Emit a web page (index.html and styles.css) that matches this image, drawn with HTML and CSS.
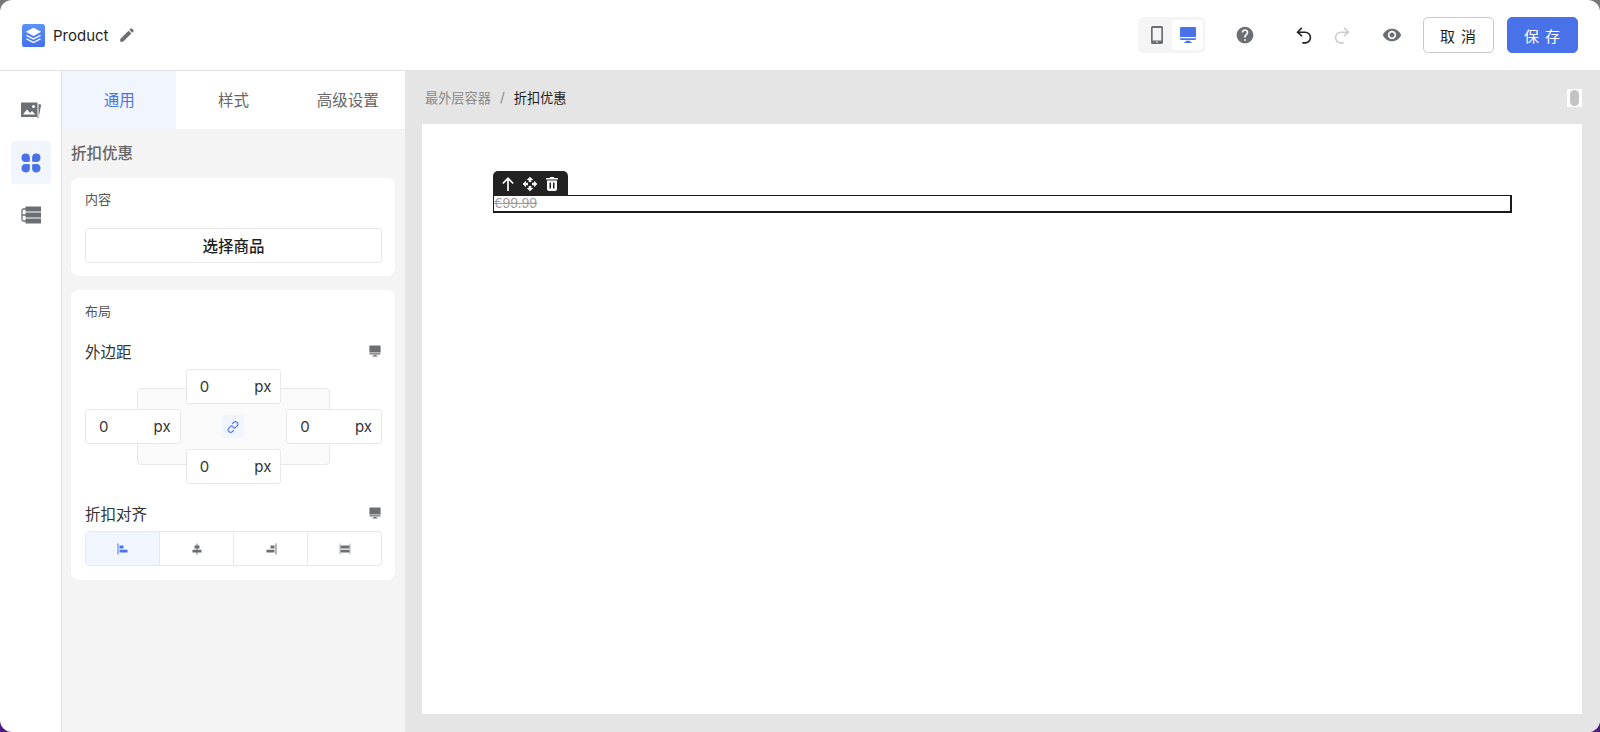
FILE: index.html
```html
<!DOCTYPE html>
<html lang="zh-CN">
<head>
  <meta charset="UTF-8" />
  <meta name="viewport" content="width=device-width, initial-scale=1.0" />
  <title>Product</title>
  <link rel="stylesheet" href="styles.css">
</head>
<body>
  <div class="app">
    <header class="topbar">
      <div class="brand">
        <svg class="logo" viewBox="0 0 24 24">
          <defs>
            <linearGradient id="logo-fill" x1="0" y1="0" x2="0" y2="1">
              <stop offset="0" stop-color="#5b93f5" />
              <stop offset="1" stop-color="#4470ec" />
            </linearGradient>
          </defs>
          <rect width="24" height="24" rx="3" fill="url(#logo-fill)" />
          <path d="M12 4l8 4.200-8 4.200-8-4.200z" fill="#fff" />
          <path d="M5.400 11.400L12 14.900l6.600-3.500 1.400.8-8 4.200-8-4.200zM5.400 15L12 18.500 18.600 15l1.400.8-8 4.200-8-4.200z" fill="#fff" />
        </svg>
        <span class="brand-name">Product</span>
        <svg class="icon-18 grey" viewBox="0 0 24 24"><path d="M3 17.250V21h3.750L17.810 9.940l-3.750-3.750L3 17.250zM20.710 7.040a1 1 0 0 0 0-1.410l-2.340-2.340a1 1 0 0 0-1.410 0l-1.830 1.830 3.750 3.750 1.830-1.830z" /></svg>
      </div>
      <div class="actions">
        <div class="device-switch">
          <span class="device">
            <svg class="icon-20 grey" viewBox="0 0 20 20"><path fill-rule="evenodd" d="M5.500 1h9A1.500 1.500 0 0 1 16 2.500v15a1.500 1.500 0 0 1-1.500 1.500h-9A1.500 1.500 0 0 1 4 17.500v-15A1.500 1.500 0 0 1 5.500 1zM5.700 3v12.600h8.600V3zM9 16.500v1h2v-1z" /></svg>
          </span>
          <span class="device active">
            <svg class="icon-20 blue" viewBox="0 0 20 20"><path d="M3 2h14a1 1 0 0 1 1 1v9H2V3a1 1 0 0 1 1-1zM2 13.200h16V14a1 1 0 0 1-1 1H3a1 1 0 0 1-1-1zM8 15.800h4l.6 1.400h1.400V18H6v-.8h1.400z" /></svg>
          </span>
        </div>
        <svg class="icon-20 grey help" viewBox="0 0 24 24"><path d="M12 2C6.480 2 2 6.480 2 12s4.480 10 10 10 10-4.480 10-10S17.520 2 12 2zm1 17h-2v-2h2v2zm2.070-7.750l-.9.920C13.450 12.900 13 13.500 13 15h-2v-.5c0-1.100.450-2.100 1.170-2.830l1.240-1.260c.370-.360.590-.860.590-1.410 0-1.100-.9-2-2-2s-2 .9-2 2H8c0-2.210 1.790-4 4-4s4 1.790 4 4c0 .880-.360 1.680-.930 2.250z" /></svg>
        <svg class="history" viewBox="0 0 18 18" fill="none" stroke="#1f1f1f" stroke-width="1.400"><path d="M3.500 6.500H10a4.800 4.800 0 0 1 0 9.600H7.500" /><path d="M7 2.600L3.200 6.500l4 3.500" /></svg>
        <svg class="history redo" viewBox="0 0 18 18" fill="none" stroke="#c9ccd1" stroke-width="1.400"><path d="M14.500 6.500H8a4.800 4.800 0 0 0 0 9.600h2.500" /><path d="M11 2.600l3.800 3.900-4 3.500" /></svg>
        <svg class="icon-20 grey eye" viewBox="0 0 24 24"><path d="M12 4.500C7 4.500 2.730 7.610 1 12c1.730 4.390 6 7.500 11 7.500s9.270-3.110 11-7.500c-1.730-4.390-6-7.500-11-7.500zM12 17c-2.760 0-5-2.240-5-5s2.240-5 5-5 5 2.240 5 5-2.240 5-5 5zm0-8c-1.660 0-3 1.340-3 3s1.340 3 3 3 3-1.340 3-3-1.340-3-3-3z" /></svg>
        <button class="btn">取 消</button>
        <button class="btn primary">保 存</button>
      </div>
    </header>

    <div class="workspace">
      <nav class="rail">
        <span class="rail-item">
          <svg class="icon-24" viewBox="0 0 24 24"><path fill="#6b6e73" d="M2 3.500h16.500v14.500H2z" /><path fill="#fff" d="M4 15.500l4-5 3 3.500 2-2 3.500 3.500z" /><circle cx="14.500" cy="7.500" r="1.500" fill="#fff" /><path fill="#6b6e73" d="M19.500 5l2.700.7-2.700 13.300-2-.3 2-1z" /></svg>
        </span>
        <span class="rail-item active">
          <svg class="icon-24" viewBox="0 0 24 24" fill="#4a72e8">
            <path d="M10.800 10.800L6.500 10.900a4.200 4.200 0 1 1 4.400-4.400z" />
            <path d="M13.200 10.800l4.300.1a4.200 4.200 0 1 0-4.400-4.400z" />
            <path d="M10.800 13.200l-4.300-.1a4.200 4.200 0 1 0 4.400 4.400z" />
            <path d="M13.200 13.200l4.300-.1a4.200 4.200 0 1 1-4.400 4.400z" />
          </svg>
        </span>
        <span class="rail-item">
          <svg class="icon-24" viewBox="0 0 24 24"><path fill="none" stroke="#6b6e73" stroke-width="1.300" d="M7 6H4.500A1.500 1.500 0 0 0 3 7.500v9A1.500 1.500 0 0 0 4.500 18H7M3 12h4" /><path fill="#6b6e73" d="M6.500 3.500H22v5H6.500zM6.500 9.500H22v5H6.500zM6.500 15.500H22v5H6.500z" /></svg>
        </span>
      </nav>

      <aside class="panel">
        <div class="tabs">
          <div class="tab active">通用</div>
          <div class="tab">样式</div>
          <div class="tab">高级设置</div>
        </div>
        <div class="panel-body">
          <h2 class="panel-title">折扣优惠</h2>
          <section class="card">
            <h3 class="card-title">内容</h3>
            <button class="pick-btn">选择商品</button>
          </section>
          <section class="card">
            <h3 class="card-title">布局</h3>
            <div class="field-head margin-head">
              <span>外边距</span>
              <svg class="icon-14 grey" viewBox="0 0 20 20"><path d="M3 2h14a1 1 0 0 1 1 1v9H2V3a1 1 0 0 1 1-1zM2 13.200h16V14a1 1 0 0 1-1 1H3a1 1 0 0 1-1-1zM8 15.800h4l.6 1.400h1.400V18H6v-.8h1.400z" /></svg>
            </div>
            <div class="margin-box">
              <div class="margin-back"></div>
              <div class="num num-top"><span>0</span><span>px</span></div>
              <div class="num num-left"><span>0</span><span>px</span></div>
              <div class="link-cell">
                <span class="link-btn">
                  <svg viewBox="0 0 16 16" fill="none" stroke="#4a72e8" stroke-width="1.300"><path d="M7 4.500l2-2a2.300 2.300 0 0 1 3.300 0l1 1a2.300 2.300 0 0 1-.3 3l-2 2a2.300 2.300 0 0 1-3.200 0" /><path d="M9 11.500l-2 2a2.300 2.300 0 0 1-3.300 0l-1-1a2.300 2.300 0 0 1 .3-3l2-2a2.300 2.300 0 0 1 3.200 0" /></svg>
                </span>
              </div>
              <div class="num num-right"><span>0</span><span>px</span></div>
              <div class="num num-bottom"><span>0</span><span>px</span></div>
            </div>
            <div class="field-head align-head">
              <span>折扣对齐</span>
              <svg class="icon-14 grey" viewBox="0 0 20 20"><path d="M3 2h14a1 1 0 0 1 1 1v9H2V3a1 1 0 0 1 1-1zM2 13.200h16V14a1 1 0 0 1-1 1H3a1 1 0 0 1-1-1zM8 15.800h4l.6 1.400h1.400V18H6v-.8h1.400z" /></svg>
            </div>
            <div class="segments">
              <span class="segment active">
                <svg viewBox="0 0 14 14" fill="#4a72e8"><path d="M1.500 1.500h1v11h-1zM3.500 3.500h4v3h-4zM3.500 7.700h8v2.800h-8z" /></svg>
              </span>
              <span class="segment">
                <svg viewBox="0 0 14 14" fill="#6b6e73"><path d="M6.500 1.500h1v11h-1zM4.500 3.500h5v3h-5zM2.500 7.700h9v2.800h-9z" /></svg>
              </span>
              <span class="segment">
                <svg viewBox="0 0 14 14" fill="#6b6e73"><path d="M11.500 1.500h1v11h-1zM6.500 3.500h4v3h-4zM2.500 7.700h8v2.800h-8z" /></svg>
              </span>
              <span class="segment">
                <svg viewBox="0 0 14 14" fill="#6b6e73"><path opacity=".5" d="M1.500 1.500h1v11h-1zM11.500 1.500h1v11h-1z" /><path d="M2.500 3.500h9v3h-9zM2.500 7.700h9v2.800h-9z" /></svg>
              </span>
            </div>
          </section>
        </div>
      </aside>

      <main class="stage">
        <div class="crumbs">
          <span class="crumb-parent">最外层容器</span>
          <span class="crumb-sep">/</span>
          <span class="crumb-current">折扣优惠</span>
          <span class="scroll-hint"><i></i></span>
        </div>
        <div class="canvas">
          <div class="selected">
            <div class="tools">
              <svg viewBox="0 0 16 16" fill="none" stroke="#fff" stroke-width="1.700"><path d="M8 15V2.500M2.800 7.500L8 2.300l5.200 5.200" /></svg>
              <svg viewBox="0 0 24 24" fill="#fff"><path d="M10 9h4V6h3l-5-5-5 5h3v3zm-1 1H6V7l-5 5 5 5v-3h3v-4zm14 2l-5-5v3h-3v4h3v3l5-5zm-9 3h-4v3H7l5 5 5-5h-3v-3z" /></svg>
              <svg viewBox="0 0 16 16" fill="#fff"><path fill-rule="evenodd" d="M6 1h4v1h4v1.500H2V2h4zM3 4.500h10V13a2 2 0 0 1-2 2H5a2 2 0 0 1-2-2zM5.500 6.500v6H7v-6zm3.500 0v6h1.500v-6z" /></svg>
            </div>
            <span class="price">€99.99</span>
          </div>
        </div>
      </main>
    </div>
  </div>
</body>
</html>
```

FILE: styles.css
```css
* {
  box-sizing: border-box;
}
html {
  background: linear-gradient(to bottom, #77777a 50%, #4f1786 50%);
}
body {
  margin: 0;
  height: 732px;
  overflow: hidden;
  font-family: Inter, "Noto Sans CJK SC", sans-serif;
  color: #1f1f1f;
}
svg {
  display: block;
  flex: none;
}
.grey { fill: #6b6e73; }
.blue { fill: #4a72e8; }
.icon-14 { width: 14px; height: 14px; }
.icon-18 { width: 18px; height: 18px; }
.icon-20 { width: 20px; height: 20px; }
.icon-24 { width: 24px; height: 24px; }

.app {
  height: 732px;
  background: #fff;
  border-radius: 12px;
  overflow: hidden;
  display: flex;
  flex-direction: column;
}

/* top bar */
.topbar {
  height: 71px;
  flex: none;
  display: flex;
  align-items: center;
  justify-content: space-between;
  padding: 0 22px;
  border-bottom: 1px solid #e2e2e2;
}
.brand {
  display: flex;
  align-items: center;
}
.logo {
  width: 23px;
  height: 23px;
}
.brand-name {
  font-size: 15px;
  margin: 0 9px 0 8px;
}
.actions {
  display: flex;
  align-items: center;
}
.device-switch {
  display: flex;
  width: 67px;
  height: 36px;
  padding: 3px 2px 3px 3px;
  background: #f5f5f5;
  border-radius: 5px;
  margin-right: 30px;
}
.device {
  flex: 1;
  display: flex;
  align-items: center;
  justify-content: center;
  border-radius: 4px;
}
.device.active {
  background: #fff;
}
.help {
  margin-right: 39px;
}
.history {
  width: 20px;
  height: 20px;
  margin-right: 18px;
}
.redo {
  margin-right: 30px;
}
.eye {
  margin-right: 21px;
}
.btn {
  width: 71px;
  height: 36px;
  background: #fff;
  border: 1px solid #c6c9ce;
  border-radius: 5px;
  font: 15px Inter, "Noto Sans CJK SC", sans-serif;
  letter-spacing: 1px;
  color: #1f1f1f;
  padding: 0;
}
.btn.primary {
  background: #4a72e8;
  border-color: #4a72e8;
  color: #fff;
  margin-left: 13px;
}

.workspace {
  flex: 1;
  display: flex;
  min-height: 0;
}

/* left rail */
.rail {
  width: 62px;
  flex: none;
  border-right: 1px solid #e2e2e2;
  padding: 18px 0 0 11px;
  display: flex;
  flex-direction: column;
  gap: 9px;
}
.rail-item {
  width: 40px;
  height: 43px;
  display: flex;
  align-items: center;
  justify-content: center;
  border-radius: 4px;
}
.rail-item.active {
  background: #f1f5fe;
}

/* settings panel */
.panel {
  width: 343px;
  flex: none;
  background: #f4f4f4;
  display: flex;
  flex-direction: column;
}
.tabs {
  display: flex;
  height: 58px;
  flex: none;
  background: #fff;
}
.tab {
  flex: 1;
  display: flex;
  align-items: center;
  justify-content: center;
  padding-bottom: 2px;
  font-size: 15.500px;
  color: #666;
}
.tab.active {
  background: #f1f5fe;
  color: #4a72e8;
}
.panel-body {
  padding: 14px 10px 13px 9px;
}
.panel-title {
  margin: 0 0 13px;
  font-size: 15.500px;
  font-weight: 500;
  line-height: 22px;
  color: #666;
}
.card {
  background: #fff;
  border-radius: 8px;
  padding: 12px 13px 13px 14px;
  margin-bottom: 14px;
}
.card-title {
  margin: 0 0 20px;
  font-size: 13px;
  font-weight: 400;
  line-height: 18px;
  color: #555;
}
.pick-btn {
  display: block;
  width: 100%;
  height: 35px;
  padding: 0 0 2px;
  background: #fff;
  border: 1px solid #e8e8e8;
  border-radius: 3px;
  font: 500 15.500px Inter, "Noto Sans CJK SC", sans-serif;
  color: #1f1f1f;
}
.field-head {
  display: flex;
  align-items: center;
  justify-content: space-between;
  height: 22px;
  padding-top: 2px;
  font-size: 15.500px;
  line-height: 20px;
  margin-bottom: 6px;
  color: #333;
}
.field-head svg {
  margin-bottom: 4px;
}
.margin-head {
  margin-top: 21px;
}
.margin-box {
  display: grid;
  grid-template-columns: repeat(3, 1fr);
  grid-template-rows: 35px 35px 35px;
  gap: 5px;
}
.margin-back {
  grid-column: 1 / 4;
  grid-row: 1 / 4;
  margin: 19px 52px;
  background: #fafafa;
  border: 1px solid #e8e8e8;
  border-radius: 4px;
}
.num {
  display: flex;
  align-items: center;
  justify-content: space-between;
  background: #fff;
  border: 1px solid #e8e8e8;
  border-radius: 3px;
  padding: 0 9px 0 13px;
  font-size: 15px;
  color: #333;
}
.num-top { grid-column: 2; grid-row: 1; }
.num-left { grid-column: 1; grid-row: 2; }
.num-right { grid-column: 3; grid-row: 2; }
.num-bottom { grid-column: 2; grid-row: 3; }
.link-cell {
  grid-column: 2;
  grid-row: 2;
  display: flex;
  align-items: center;
  justify-content: center;
}
.link-btn {
  width: 22px;
  height: 23px;
  display: flex;
  align-items: center;
  justify-content: center;
  background: #f1f5fe;
  border-radius: 3px;
}
.link-btn svg {
  width: 14px;
  height: 14px;
}
.align-head {
  margin: 19px 0 6px;
}
.segments {
  display: flex;
  height: 35px;
  margin-bottom: 1px;
  border: 1px solid #e8e8e8;
  border-radius: 4px;
  overflow: hidden;
}
.segment {
  flex: 1;
  display: flex;
  align-items: center;
  justify-content: center;
  border-left: 1px solid #e8e8e8;
}
.segment:first-child {
  border-left: 0;
}
.segment.active {
  background: #f1f5fe;
}
.segment svg {
  width: 14px;
  height: 14px;
}

/* canvas side */
.stage {
  flex: 1;
  min-width: 0;
  background: #e5e5e5;
  padding: 0 18px 18px 17px;
  display: flex;
  flex-direction: column;
}
.crumbs {
  height: 53px;
  flex: none;
  display: flex;
  align-items: center;
  padding: 0 3px 1px;
  font-size: 13.200px;
}
.crumb-parent {
  color: #888;
}
.crumb-sep {
  color: #888;
  margin: 0 9px;
}
.scroll-hint {
  margin-left: auto;
  width: 15px;
  height: 18px;
  background: #fff;
  display: flex;
  justify-content: center;
  margin-right: -3px;
  margin-top: 2px;
}
.scroll-hint i {
  width: 9px;
  height: 16px;
  margin-top: 1px;
  background: #c4c4c4;
  border-radius: 5px;
}
.canvas {
  flex: 1;
  background: #fff;
  padding: 71px 70px 0 71px;
}
.selected {
  position: relative;
  height: 18px;
  border: 2px solid #1a1a1a;
  border-top-width: 1px;
  border-left-width: 1px;
  font-size: 12.700px;
  line-height: 16px;
}
.tools {
  position: absolute;
  left: -1px;
  bottom: 100%;
  width: 75px;
  height: 25px;
  display: flex;
  align-items: center;
  gap: 6px;
  padding: 0 7px;
  background: #222;
  border-radius: 5px 5px 0 0;
}
.tools svg {
  width: 16px;
  height: 16px;
}
.price {
  color: #999;
  text-decoration: line-through;
}
```
